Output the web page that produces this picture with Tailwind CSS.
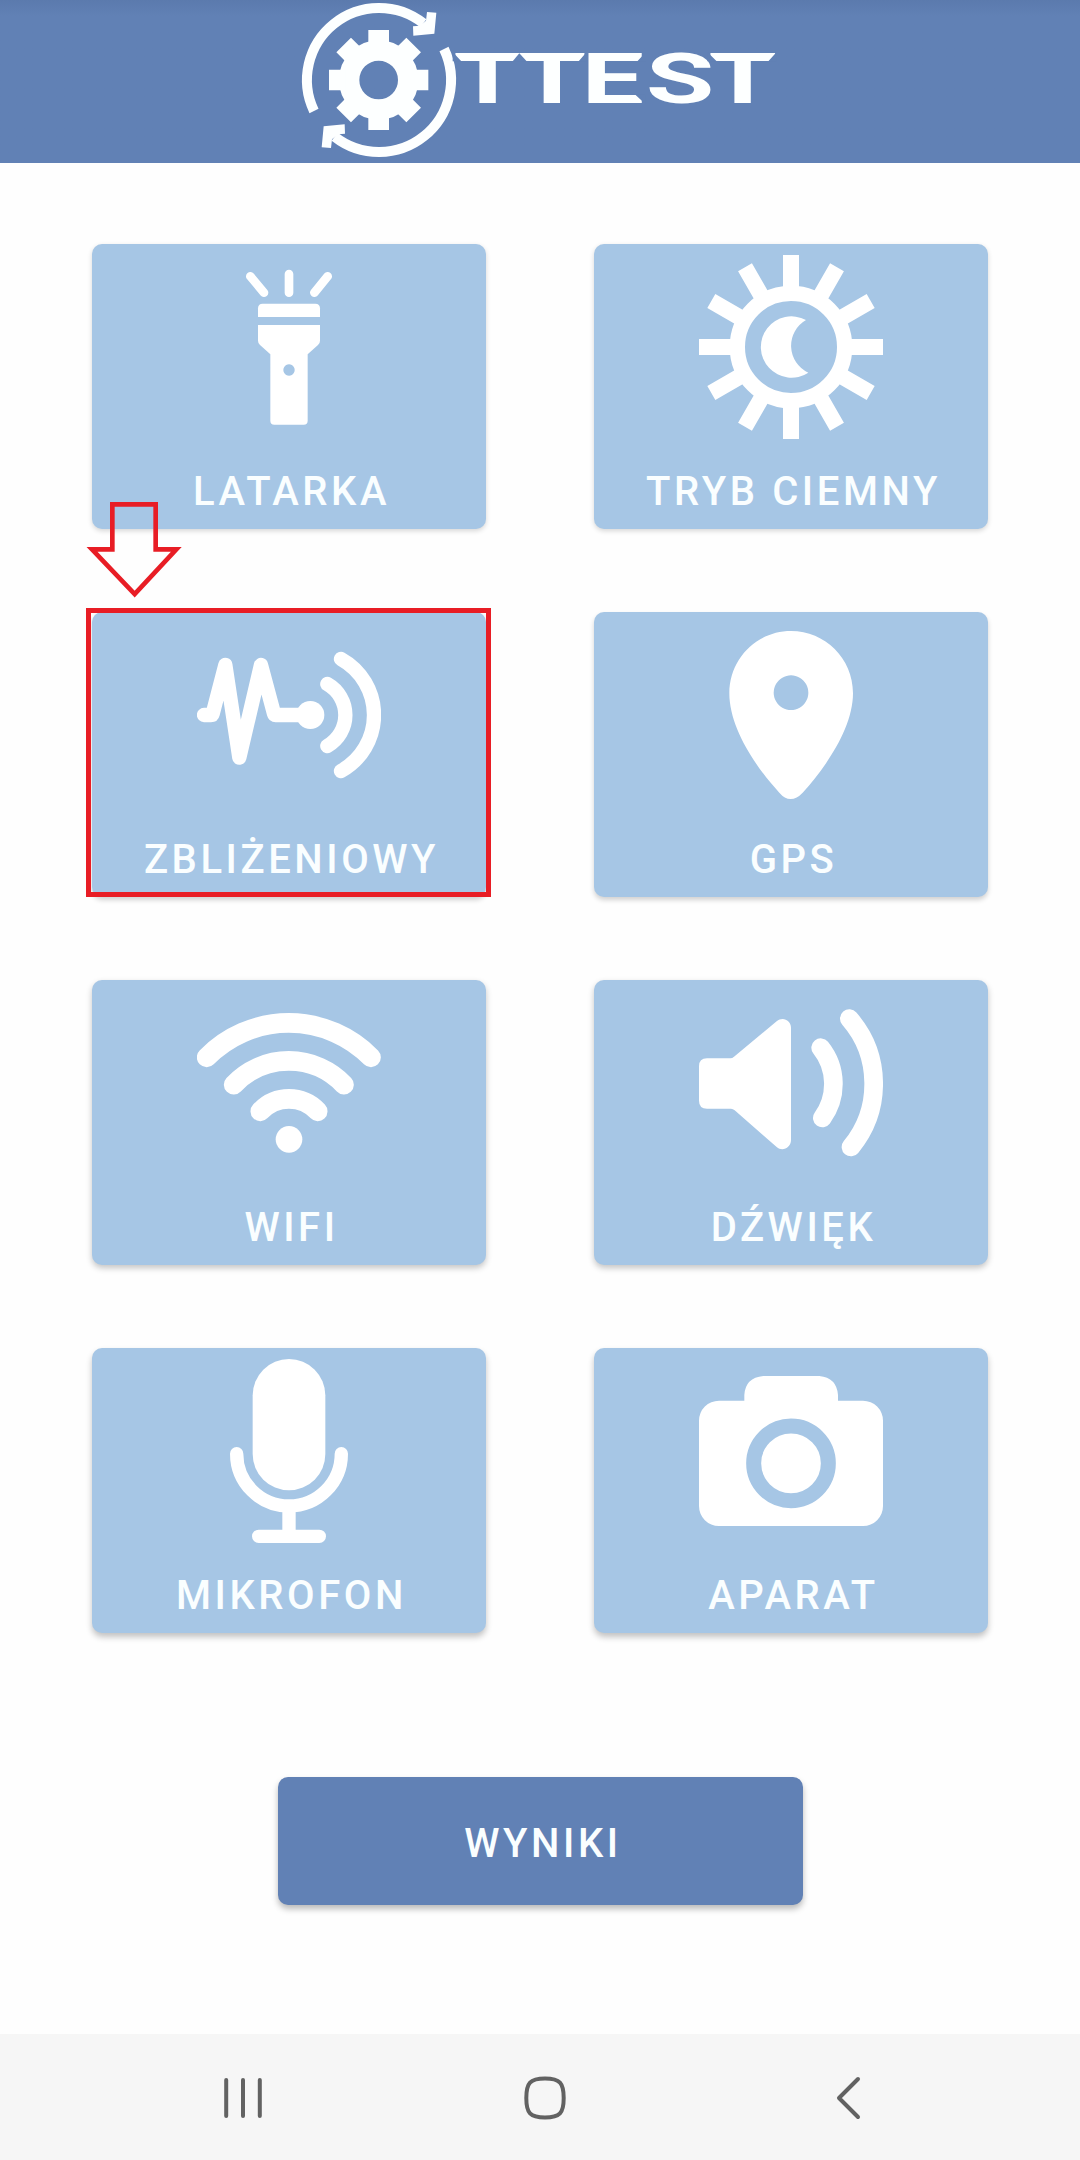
<!DOCTYPE html>
<html lang="pl">
<head>
<meta charset="utf-8">
<title>OTTEST</title>
<script src="https://cdn.jsdelivr.net/npm/@tailwindcss/browser@4"></script>
</head>
<body class="bg-[#fefefe]">
<div class="flex h-[2160px] w-[1080px] flex-col overflow-hidden font-['Roboto',sans-serif] text-[40px] leading-[48px] font-medium tracking-[3.57px] text-[#fafeff]">
  <header class="flex h-[163px] shrink-0 justify-center bg-[#6181b5] bg-linear-to-b from-[#5b7aad] to-[#6181b5] to-10%">
    <svg class="h-[163px] w-[500px]" viewBox="0 0 1500 489" fill="#fdffff">
      <g fill="none" stroke="#fdffff" stroke-width="30">
        <path d="M72 333A216 216 0 0 1 400 69.800"/>
        <path d="M462 147A216 216 0 0 1 134 410.200"/>
      </g>
      <path d="M411 36 439 38 433 101 370 107 369 79 390 77 408 62Z"/>
      <path d="M123 444 95 442 101 379 164 373 165 401 144 403 126 418Z"/>
      <!-- gear -->
      <circle cx="266" cy="240" r="88.500" fill="none" stroke="#fdffff" stroke-width="61"/>
      <g stroke="#fdffff" stroke-width="62">
        <path d="M266 90V140M266 340V390M117 240H166M366 240H415"/>
        <path d="M161 135 196 170M336 310 371 345M371 135 336 170M196 310 161 345"/>
      </g>
      <text transform="scale(1.57 1)" y="309" x="312 434.500 557 680 799" font-family="Roboto" font-weight="700" font-size="213" letter-spacing="0">TTEST</text>
      <!-- bevelled ends of the wordmark -->
      <g fill="#6181b5">
        <path d="M488 156 514 184H488ZM890 156 866 184H890ZM1252 156 1280 184H1252ZM1460 156 1435 184H1460ZM1068 156 1042 184H1068ZM1036 284 1066 312V284Z"/>
        <path d="M688 160 668 184H710Z"/>
      </g>
    </svg>
  </header>

  <main class="flex grow flex-col items-center pt-[81px]">
    <div class="grid grid-cols-[394px_394px] gap-x-[108px] gap-y-[83px]">
      <button class="flex h-[285px] flex-col items-center rounded-[10px] bg-[#a6c6e5] pt-[11px] shadow-[0_2px_5px_rgba(0,0,0,0.16)]">
        <svg class="size-[184px]" viewBox="351 75 552 552" fill="white">
          <path d="M511 139 552 188M627 132V188M743 139 703 188" fill="none" stroke="white" stroke-width="26" stroke-linecap="round"/>
          <path d="M534 261V235Q534 221 548 221H706Q720 221 720 235V261Z"/>
          <path fill-rule="evenodd" d="M534 285H720V332Q720 340 714 345L683 373V572Q683 584 671 584H583Q571 584 571 572V373L540 345Q534 340 534 332ZM627 403a17 17 0 1 0 .1 0Z"/>
        </svg>
        <span class="mt-[29px] pl-[5px]">LATARKA</span>
      </button>
      <button class="flex h-[285px] flex-col items-center rounded-[10px] bg-[#a6c6e5] pt-[11px] shadow-[0_2px_5px_rgba(0,0,0,0.16)]">
        <svg class="size-[184px]" viewBox="357 75 552 552" fill="none" stroke="white" stroke-width="48">
          <circle cx="633" cy="351" r="161" stroke-width="46"/>
          <path d="M633 75V180M633 522V627M357 351H462M804 351H909"/>
          <path transform="rotate(30 633 351)" d="M633 75V180M633 522V627M357 351H462M804 351H909"/>
          <path transform="rotate(60 633 351)" d="M633 75V180M633 522V627M357 351H462M804 351H909"/>
          <path d="M678 270A92 92 0 1 0 685 428A89 89 0 0 1 678 270Z" fill="white" stroke="none"/>
        </svg>
        <span class="mt-[29px] pl-[5px]">TRYB CIEMNY</span>
      </button>
      <button class="relative flex h-[285px] flex-col items-center rounded-[10px] bg-[#a6c6e5] pt-[11px] shadow-[0_3px_5px_rgba(0,0,0,0.18)]">
        <svg class="size-[184px]" viewBox="351 399 552 552" fill="none" stroke="white" stroke-width="43" stroke-linecap="round" stroke-linejoin="round">
          <path d="M372 675H393Q397 675 398 671L436 525 478 803 543 525 582 671Q583 675 587 675H691"/>
          <circle cx="691" cy="675" r="42" fill="white" stroke="none"/>
          <path d="M742 582A107 107 0 0 1 742 768M783 507A192 192 0 0 1 783 843"/>
        </svg>
        <span class="mt-[29px] pl-[5px]">ZBLIŻENIOWY</span>
        <span class="absolute -top-[4px] -left-[6px] h-[289px] w-[405px] border-5 border-[#e81d25]"></span>
        <svg class="absolute -top-[112px] -left-[6px] h-[100px] w-[96px]" viewBox="18 30 288 300" fill="none" stroke="#e81d25" stroke-width="14">
          <path d="M97 43H227V178H289L164 312 36 178H97Z" stroke-miterlimit="6"/>
        </svg>
      </button>
      <button class="flex h-[285px] flex-col items-center rounded-[10px] bg-[#a6c6e5] pt-[11px] shadow-[0_3px_5px_rgba(0,0,0,0.18)]">
        <svg class="size-[184px]" viewBox="357 69 552 552" fill="white">
          <path fill-rule="evenodd" d="M633 93C735 93 819 175 819 280C819 385 735 505 668 578Q650 597 632 597Q614 597 598 578C530 505 448 385 448 280C448 175 531 93 633 93ZM633 226a52 52 0 1 0 .1 0Z"/>
        </svg>
        <span class="mt-[29px] pl-[5px]">GPS</span>
      </button>
      <button class="flex h-[285px] flex-col items-center rounded-[10px] bg-[#a6c6e5] pt-[11px] shadow-[0_3px_6px_rgba(0,0,0,0.23)]">
        <svg class="size-[184px]" viewBox="351 63 552 552" fill="none" stroke="white" stroke-width="59" stroke-linecap="round">
          <path d="M380 262A346 346 0 0 1 873 262M461 344A228 228 0 0 1 792 344M541 424A118 118 0 0 1 713 424"/>
          <circle cx="627" cy="508" r="40" fill="white" stroke="none"/>
        </svg>
        <span class="mt-[29px] pl-[5px]">WIFI</span>
      </button>
      <button class="flex h-[285px] flex-col items-center rounded-[10px] bg-[#a6c6e5] pt-[11px] shadow-[0_3px_6px_rgba(0,0,0,0.23)]">
        <svg class="size-[184px]" viewBox="357 63 552 552" fill="white">
          <path d="M381 265H451Q457 265 462 260L590 154C608 138 633 151 633 173V510C633 532 608 547 590 531L464 421Q459 416 453 416H381Q357 416 357 392V289Q357 265 381 265Z"/>
          <path d="M722 233A174 174 0 0 1 727 444M808 146A298 298 0 0 1 813 531" fill="none" stroke="white" stroke-width="56" stroke-linecap="round"/>
        </svg>
        <span class="mt-[29px] pl-[5px]">DŹWIĘK</span>
      </button>
      <button class="flex h-[285px] flex-col items-center rounded-[10px] bg-[#a6c6e5] pt-[11px] shadow-[0_4px_6px_rgba(0,0,0,0.24)]">
        <svg class="size-[184px]" viewBox="351 72 552 552" fill="none" stroke="white" stroke-width="40" stroke-linecap="round">
          <rect x="518" y="72" width="218" height="394" rx="109" fill="white" stroke="none"/>
          <path d="M470 356A157 157 0 0 0 784 356M627 513V600M536 604H718"/>
        </svg>
        <span class="mt-[29px] pl-[5px]">MIKROFON</span>
      </button>
      <button class="flex h-[285px] flex-col items-center rounded-[10px] bg-[#a6c6e5] pt-[11px] shadow-[0_4px_6px_rgba(0,0,0,0.24)]">
        <svg class="size-[184px]" viewBox="357 72 552 552" fill="white">
          <path d="M417 197H493V180Q496 128 550 123H718Q770 128 774 180V197H849A60 60 0 0 1 909 257V513A60 60 0 0 1 849 573H417A60 60 0 0 1 357 513V257A60 60 0 0 1 417 197Z"/>
          <circle cx="633" cy="385" r="112" fill="none" stroke="#a6c6e5" stroke-width="45"/>
        </svg>
        <span class="mt-[29px] pl-[5px]">APARAT</span>
      </button>
    </div>
    <button class="mt-[144px] flex h-[128px] w-[525px] items-center justify-center rounded-[10px] bg-[#6181b5] pt-[6px] pl-[6px] shadow-[0_4px_6px_rgba(0,0,0,0.27)]">WYNIKI</button>
  </main>

  <nav class="flex h-[126px] shrink-0 items-center bg-[#f6f6f6] pl-[218px]">
    <svg class="h-[50px] w-[650px]" viewBox="218 2072 650 50" fill="none" stroke="#626262" stroke-width="4" stroke-linecap="round" stroke-linejoin="round">
      <path d="M226.200 2080V2116M243 2080V2116M259.800 2080V2116"/>
      <path d="M545 2078.500C560 2078.500 563.700 2083 563.700 2098S560 2117.500 545 2117.500 526.300 2113 526.300 2098 530 2078.500 545 2078.500Z"/>
      <path d="M858 2079 839 2098 858 2117"/>
    </svg>
  </nav>
</div>
</body>
</html>
